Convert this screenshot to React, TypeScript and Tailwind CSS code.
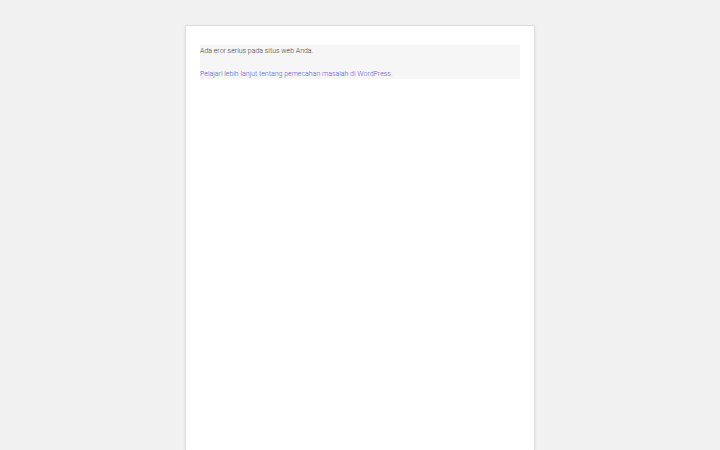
export default function App() {
  return (
    <div className="min-h-[450px] bg-[#f1f1f1] pt-[25px] font-['Roboto',sans-serif] text-[7px] font-light leading-[10px] text-[#3c3c3c]">
      <div className="mx-auto w-[350px] h-[425px] border border-b-0 border-[#dcdcdc] bg-white px-[14px] pt-[19px] shadow-[0_1px_3px_rgba(0,0,0,0.06)]">
        <div className="bg-[#f6f6f6] pt-[1px]">
          <p>Ada eror serius pada situs web Anda.</p>
          <p className="mt-[13px]">
            <a href="#" className="text-[#5656d0]">
              Pelajari lebih lanjut tentang pemecahan masalah di WordPress.
            </a>
          </p>
        </div>
      </div>
    </div>
  )
}
